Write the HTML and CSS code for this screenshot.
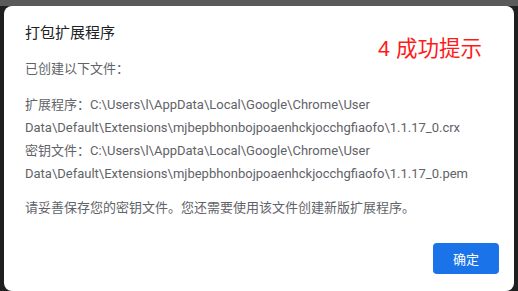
FILE: index.html
```html
<!DOCTYPE html>
<html lang="zh-CN">
<head>
<meta charset="utf-8">
<link rel="stylesheet" href="styles.css">
</head>
<body>
<div class="topbar"></div>
<div class="stage">
  <div class="dialog">
    <div class="title">打包扩展程序</div>
    <div class="body">
      <p class="intro">已创建以下文件：</p>
      <p class="files">扩展程序：C:\Users\l\AppData\Local\Google\Chrome\User Data\Default\Extensions\mjbepbhonbojpoaenhckjocchgfiaofo\1.1.17_0.crx<br>密钥文件：C:\Users\l\AppData\Local\Google\Chrome\User Data\Default\Extensions\mjbepbhonbojpoaenhckjocchgfiaofo\1.1.17_0.pem</p>
      <p class="note">请妥善保存您的密钥文件。您还需要使用该文件创建新版扩展程序。</p>
    </div>
    <div class="actions">
      <button class="ok">确定</button>
    </div>
    <div class="annotation">4 成功提示</div>
  </div>
</div>
</body>
</html>
```

FILE: styles.css
```css
html, body {
  margin: 0;
  padding: 0;
  height: 100%;
}
body {
  background: #1f1f1f;
  font-family: Roboto, "Noto Sans CJK SC", sans-serif;
  display: flex;
  flex-direction: column;
  overflow: hidden;
}
.topbar {
  height: 6px;
  background: #5a5a5a;
  flex: none;
}
.stage {
  flex: 1;
  padding: 0 4px;
  display: flex;
}
.dialog {
  position: relative;
  flex: 1;
  background: #fff;
  border-radius: 8px;
  padding: 17px 24px 0 21px;
  display: flex;
  flex-direction: column;
}
.title {
  font-size: 15px;
  line-height: 20px;
  color: #202124;
}
.body {
  font-size: 13px;
  line-height: 23px;
  color: #5f6368;
  margin-top: 14px;
}
.body p {
  margin: 0;
}
.intro {
  margin-bottom: 13px !important;
}
.files {
  margin-bottom: 11px !important;
}
.actions {
  display: flex;
  justify-content: flex-end;
  margin-top: 24px;
}
.ok {
  width: 66px;
  height: 31px;
  border: none;
  border-radius: 4px;
  background: #1a73e8;
  color: #fff;
  font-family: Roboto, "Noto Sans CJK SC", sans-serif;
  font-size: 13px;
  margin-right: -9px;
}
.annotation {
  position: absolute;
  left: 374px;
  top: 29px;
  color: #ff1a1a;
  font-size: 21.5px;
  line-height: 28px;
  font-family: "Liberation Sans", "Noto Sans CJK SC", sans-serif;
}
```
